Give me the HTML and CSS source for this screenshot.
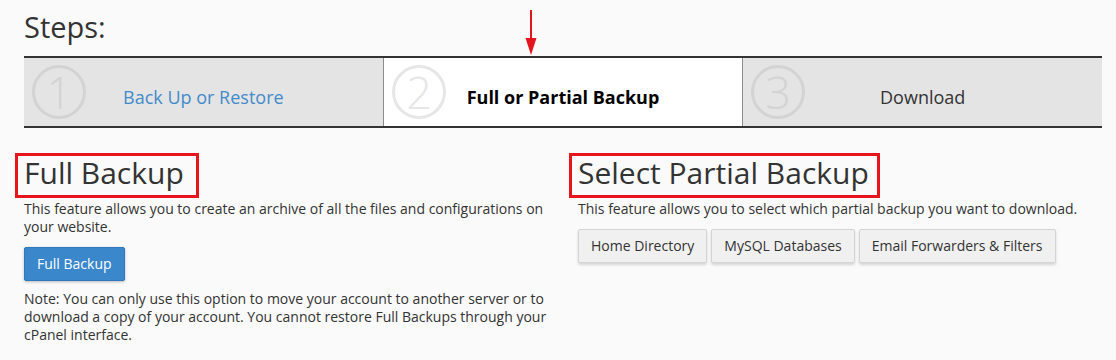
FILE: index.html
```html
<!DOCTYPE html>
<html lang="en">
<head>
<meta charset="utf-8">
<title>Backup Wizard</title>
<link rel="stylesheet" href="styles.css">
</head>
<body>
<div class="page">
  <svg class="pointer" width="12" height="46" viewBox="0 0 12 46" aria-hidden="true">
    <rect x="5" y="0" width="2" height="30" fill="#e3161d"/>
    <polygon points="0.5,28 11.5,28 6,45" fill="#e3161d"/>
  </svg>

  <h3 class="steps-title">Steps:</h3>

  <div class="steps">
    <div class="step step-done">
      <svg class="step-num" width="66" height="66" viewBox="0 0 66 66" aria-hidden="true">
        <circle cx="33" cy="33" r="25.5" fill="none" stroke-width="3"/>
        <text x="33" y="49.5" text-anchor="middle">1</text>
      </svg>
      <a class="step-label step-link" href="#">Back Up or Restore</a>
    </div>
    <div class="step step-current">
      <svg class="step-num" width="66" height="66" viewBox="0 0 66 66" aria-hidden="true">
        <circle cx="33" cy="33" r="25.5" fill="none" stroke-width="3"/>
        <text x="33" y="49.5" text-anchor="middle">2</text>
      </svg>
      <span class="step-label step-strong">Full or Partial Backup</span>
    </div>
    <div class="step step-next">
      <svg class="step-num" width="66" height="66" viewBox="0 0 66 66" aria-hidden="true">
        <circle cx="33" cy="33" r="25.5" fill="none" stroke-width="3"/>
        <text x="33" y="49.5" text-anchor="middle">3</text>
      </svg>
      <span class="step-label">Download</span>
    </div>
  </div>

  <div class="sections">
    <section class="section">
      <h2 class="section-title">Full Backup</h2>
      <p class="text">This feature allows you to create an archive of all the files and configurations on your website.</p>
      <button class="btn btn-primary" type="button">Full Backup</button>
      <p class="text note">Note: You can only use this option to move your account to another server or to download a copy of your account. You cannot restore Full Backups through your cPanel interface.</p>
    </section>
    <section class="section">
      <h2 class="section-title section-title-wide">Select Partial Backup</h2>
      <p class="text">This feature allows you to select which partial backup you want to download.</p>
      <div class="btn-group">
        <button class="btn btn-default" type="button">Home Directory</button>
        <button class="btn btn-default" type="button">MySQL Databases</button>
        <button class="btn btn-default" type="button">Email Forwarders &amp; Filters</button>
      </div>
    </section>
  </div>
</div>
</body>
</html>
```

FILE: styles.css
```css
html, body {
  margin: 0;
  padding: 0;
}

body {
  background: #fafafa;
  color: #333;
  font-family: "Open Sans", "Liberation Sans", Arial, sans-serif;
  font-size: 14px;
  line-height: 18px;
}

.page {
  position: relative;
  padding: 11px 14px 20px 24px;
}

.pointer {
  position: absolute;
  left: 525px;
  top: 10px;
}

.steps-title {
  margin: 0 0 13px;
  font-size: 29px;
  line-height: 32px;
  font-weight: 400;
  color: #333;
}

.steps {
  display: flex;
  border-top: 2px solid #333;
  border-bottom: 2px solid #333;
}

.step {
  position: relative;
  flex: 1 1 0;
  height: 68px;
  box-sizing: border-box;
  padding-top: 10px;
  display: flex;
  align-items: center;
  justify-content: center;
  background: #e4e4e4;
}

.step + .step {
  border-left: 1px solid #8c8c8c;
}

.step-current {
  background: #fff;
}

.step-num {
  position: absolute;
  left: 2px;
  top: 1px;
  stroke: #d3d3d3;
  fill: #d3d3d3;
}

.step-num text {
  stroke: none;
  font-family: "Open Sans", "Liberation Sans", Arial, sans-serif;
  font-size: 45px;
  font-weight: 350;
}

.step-current .step-num {
  stroke: #e6e6e6;
  fill: #e6e6e6;
}

.step-label {
  font-size: 18px;
  line-height: 20px;
  color: #333;
}

.step-link {
  color: #428bca;
  text-decoration: none;
}

.step-strong {
  font-weight: 700;
  color: #000;
}

.sections {
  display: grid;
  grid-template-columns: 1fr 1fr;
  column-gap: 30px;
  margin-top: 25px;
}

.section-title {
  width: fit-content;
  margin: 0 0 2px -9px;
  padding: 0 12px 5px 6px;
  border: 3px solid #e8141c;
  font-size: 30px;
  line-height: 34px;
  font-weight: 400;
  color: #333;
}

.section-title-wide {
  padding-right: 8px;
}

.text {
  margin: 0;
}

.note {
  margin-top: 9px;
}

.btn {
  display: inline-block;
  margin: 11px 0 0;
  padding: 6px 12px;
  font-family: "Open Sans", "Liberation Sans", Arial, sans-serif;
  font-size: 14px;
  line-height: 20px;
  border: 1px solid transparent;
  border-radius: 2px;
  cursor: pointer;
}

.btn-primary {
  background: #3a87cb;
  border-color: #2f78bb;
  color: #fff;
  box-shadow: 0 1px 3px rgba(0, 0, 0, 0.25);
}

.btn-group {
  display: flex;
  gap: 4px;
  margin-top: 11px;
}

.btn-group .btn {
  margin: 0;
}

.btn-default {
  background: #f0f0f0;
  border-color: #d4d4d4;
  color: #333;
  box-shadow: 0 2px 3px rgba(0, 0, 0, 0.15);
}
```
